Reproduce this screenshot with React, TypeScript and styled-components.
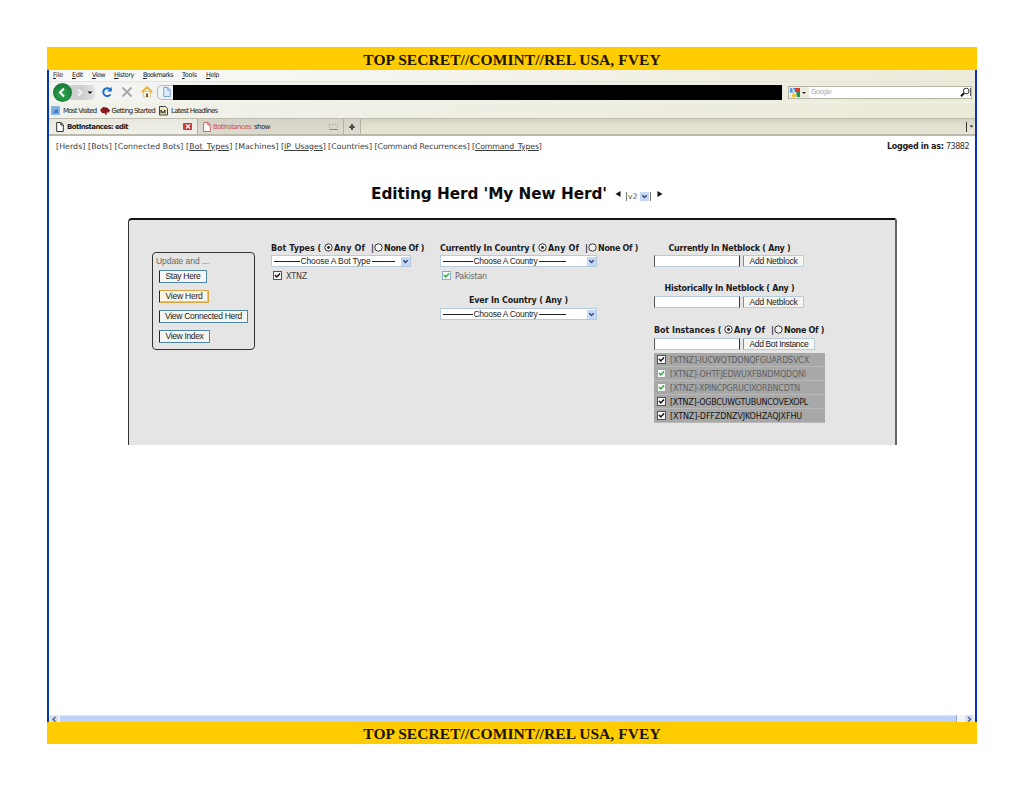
import React, { useLayoutEffect, useRef, useState } from "react";
import styled, { createGlobalStyle } from "styled-components";

const Global = createGlobalStyle`
  * { box-sizing: border-box; }
  body { margin: 0; background: #fff; color: #111; }
`;

const sans = `"DejaVu Sans", Verdana, sans-serif`;
const ui = `"Liberation Sans", Arial, sans-serif`;

const Page = styled.main`
  width: 1024px;
  height: 791px;
  padding: 47px 47px 0;
  overflow: hidden;
`;
const Banner = styled.div<{ $h: number }>`
  height: ${(p) => p.$h}px;
  width: 930px;
  background: #ffcc00;
  text-align: center;
  font: bold 15.5px/${(p) => p.$h + 2}px "Liberation Serif", serif;
  color: #1a1400;
`;
const Browser = styled.section`
  width: 930px;
  height: 652px;
  border-left: 2px solid #0636b8;
  border-right: 2px solid #0a2cc8;
  display: flex;
  flex-direction: column;
`;
const Label = styled.span<{ $size: number; $bold?: boolean; $color?: string; $ui?: boolean }>`
  display: inline-block;
  white-space: pre;
  font-family: ${(p) => (p.$ui ? ui : sans)};
  font-size: ${(p) => p.$size}px;
  font-weight: ${(p) => (p.$bold ? 700 : 400)};
  color: ${(p) => p.$color || "#1c1c1c"};
  flex: none;
`;

type FitProps = { w: number; size?: number; bold?: boolean; color?: string; plain?: boolean; children: React.ReactNode };

/* Tracks a label so that it fills the requested width. */
function Fit({ w, size = 8, bold, color, plain, children }: FitProps) {
  const ref = useRef<HTMLSpanElement>(null);
  const [gap, setGap] = useState(0);
  useLayoutEffect(() => {
    const el = ref.current;
    if (!el) return;
    const n = (el.textContent || "").length;
    if (n > 0) setGap((w - el.getBoundingClientRect().width) / n);
  }, [w]);
  return (
    <Label ref={ref} $size={size} $bold={bold} $color={color} $ui={plain} style={{ letterSpacing: gap }}>
      {children}
    </Label>
  );
}

const MenuBar = styled.div`
  height: 11px;
  display: flex;
  align-items: flex-start;
  gap: 9px;
  padding: 1px 0 0 4px;
  line-height: 9px;
  background: linear-gradient(90deg, #f8f9f8, #f4f4ee 40%, #efeee0 75%, #edebdc);
`;
const Toolbar = styled.div`
  height: 21px;
  display: flex;
  align-items: center;
  border-top: 1px solid #e4e4de;
  background: linear-gradient(90deg, #f4f5f3, #efefe6 50%, #ecead9);
`;
const Back = styled.div`
  width: 19px;
  height: 19px;
  margin-left: 4px;
  border-radius: 50%;
  background: radial-gradient(circle at 50% 60%, #2eaa50, #1b7d38 65%, #4c8c5a);
  display: flex;
  z-index: 1;
`;
const Forward = styled.div`
  width: 25px;
  height: 15px;
  margin-left: -2px;
  background: linear-gradient(90deg, #cfd1d0 55%, #e4e5e2);
  border-radius: 0 4px 4px 0;
  display: flex;
`;
const NavIcons = styled.div`
  display: flex;
  align-items: center;
  gap: 8px;
  margin-left: 6px;
`;
const PageSlot = styled.div`
  width: 16px;
  height: 15px;
  margin-left: 4px;
  border: 1px solid #b9b9b4;
  border-right: 0;
  border-radius: 5px 0 0 5px;
  background: #eef3f8;
  display: flex;
  align-items: center;
  justify-content: flex-end;
  padding-right: 2px;
`;
const Redacted = styled.div`
  width: 609px;
  height: 15px;
  background: #000;
`;
const Search = styled.div`
  margin-left: 6px;
  width: 184px;
  height: 13px;
  border: 1px solid #b5b5a6;
  background: #fff;
  display: flex;
  align-items: center;
  line-height: 11px;
`;
const Engine = styled.div`
  width: 20px;
  height: 11px;
  margin-right: 2px;
  background: #edebe0;
  display: flex;
`;
const Spacer = styled.div`
  flex: 1;
`;
const Bookmarks = styled.div`
  height: 16px;
  display: flex;
  align-items: center;
  padding: 1px 0 0 2px;
  line-height: 15px;
  border-top: 1px solid #f4f3e8;
  background: linear-gradient(90deg, #f1f2ec, #ebead9);
`;
const BookmarkIcon = styled.div<{ $ml?: number }>`
  width: 10px;
  height: 10px;
  margin-left: ${(p) => p.$ml || 0}px;
  margin-right: 2px;
  display: flex;
`;
const Tabs = styled.div`
  height: 18px;
  display: flex;
  align-items: center;
  border-top: 1px solid #bdbcae;
  border-bottom: 2px solid #bbb9a9;
  background: linear-gradient(#d3d1c2, #e3e1d0 45%, #e6e4d2);
`;
const Tab = styled.div<{ $w: number; $active?: boolean }>`
  width: ${(p) => p.$w}px;
  height: 15px;
  padding: ${(p) => (p.$active ? "0 5px 0 7px" : "0 5px")};
  display: flex;
  align-items: center;
  line-height: 14px;
  border-right: 1px solid #b3b1a5;
  background: ${(p) => (p.$active ? "linear-gradient(#e9e8df, #f1f0e8)" : "linear-gradient(#d5d3c7, #dddbcf)")};
`;
const TabText = styled.div<{ $ml?: number }>`
  margin-left: ${(p) => p.$ml ?? 3}px;
  display: flex;
`;
const CloseButton = styled.div`
  width: 9px;
  height: 7px;
  background: #c93b3b;
  border-radius: 1px;
  display: flex;
  justify-content: center;
`;
const GhostClose = styled.div`
  width: 9px;
  height: 6px;
  border: 1px dotted #aaa;
  border-bottom: 1px solid #888;
`;
const TabEnd = styled.div`
  width: 9px;
  height: 10px;
  border-left: 1px solid #333;
  display: flex;
  align-items: center;
  justify-content: center;
`;

const Content = styled.div`
  flex: 1;
  background: #fff;
`;
const NavRow = styled.div`
  height: 21px;
  padding: 0 6px 0 7px;
  display: flex;
  align-items: center;
  justify-content: space-between;
  line-height: 12px;
`;
const Links = styled.nav`
  display: flex;
`;
const Account = styled.div`
  display: flex;
`;
const Ul = styled.u`
  text-underline-offset: 1px;
  text-decoration-thickness: 1px;
`;
const Title = styled.h1`
  margin: 25px 0 0 322px;
  height: 24px;
  display: flex;
  align-items: center;
  line-height: 24px;
  font-weight: 400;
`;
const TitleText = styled.div`
  width: 244px;
  display: flex;
  flex: none;
`;
const Version = styled.div`
  height: 9px;
  width: 25px;
  margin: 4px 6px 0 5px;
  border-left: 1px solid #777;
  border-right: 1px solid #777;
  display: flex;
  align-items: center;
  justify-content: space-between;
  padding: 0 1px;
  line-height: 9px;
`;
const Panel = styled.div`
  margin: 12px 0 0 79px;
  width: 769px;
  height: 227px;
  padding: 22px 0 0 23px;
  background: #e5e5e5;
  border-top: 2px solid #111;
  border-left: 1px solid #333;
  border-right: 2px solid #666;
  border-radius: 4px 3px 0 0;
  display: flex;
  align-items: flex-start;
`;
const ActionBox = styled.div`
  width: 103px;
  height: 98px;
  margin-top: 10px;
  padding: 3px 0 0 6px;
  border: 1px solid #333;
  border-radius: 4px;
  display: flex;
  flex-direction: column;
  align-items: flex-start;
  gap: 7px;
`;
const Caption = styled.div`
  height: 7px;
  line-height: 11px;
  display: flex;
  margin-left: -3px;
`;
const Button = styled.div<{ $w: number; $hot?: boolean; $soft?: boolean }>`
  width: ${(p) => p.$w}px;
  height: ${(p) => (p.$soft ? 12 : 13)}px;
  line-height: 11px;
  display: flex;
  justify-content: center;
  background: ${(p) => (p.$hot ? "#fbf6e6" : "#f5f5f2")};
  border: 1px solid ${(p) => (p.$hot ? "#d9a441" : p.$soft ? "#b5ccd9" : "#4f86a6")};
  border-left-color: ${(p) => (p.$soft ? "#889" : "#152c44")};
  border-radius: 1px;
  ${(p) => (p.$hot ? "box-shadow: inset -1px -1px #efc46d;" : "")}
`;
const Column = styled.div<{ $ml: number; $w: number }>`
  width: ${(p) => p.$w}px;
  margin-left: ${(p) => p.$ml}px;
  flex: none;
`;
const Heading = styled.div<{ $center?: number; $mt?: number; $h?: number }>`
  margin-top: ${(p) => p.$mt || 0}px;
  height: ${(p) => p.$h || 14}px;
  line-height: 12px;
  display: flex;
  align-items: flex-start;
  padding-top: 1px;
  width: ${(p) => (p.$center ? p.$center + "px" : "auto")};
  justify-content: ${(p) => (p.$center ? "center" : "flex-start")};
`;
const Select = styled.div<{ $w: number }>`
  width: ${(p) => p.$w}px;
  height: 12px;
  border: 1px solid #b5cbdc;
  background: #fff;
  display: flex;
  align-items: center;
  padding: 0 0 0 2px;
  line-height: 10px;
`;
const Dash = styled.i<{ $lead?: boolean }>`
  flex: 1 1 ${(p) => (p.$lead ? 2 : 0)}px;
  height: 1px;
  margin: 0 1px 0 ${(p) => (p.$lead ? 0 : 1)}px;
  background: #222;
`;
const Drop = styled.div<{ $gap: number }>`
  width: 9px;
  height: 9px;
  flex: none;
  margin-left: ${(p) => p.$gap}px;
  background: #c4d7f5;
  display: flex;
`;
const CheckRow = styled.div`
  height: 18px;
  padding: 0 0 1px 2px;
  display: flex;
  align-items: center;
  gap: 4px;
  line-height: 10px;
`;
const CheckText = styled.div`
  display: flex;
  padding-top: 2px;
`;
const InputRow = styled.div`
  display: flex;
  height: 12px;
  gap: 3px;
`;
const Input = styled.div`
  width: 86px;
  height: 12px;
  background: #fff;
  border: 1px solid #b5cbdc;
  border-left-color: #555;
  border-right: 1px solid #333;
`;
const List = styled.div`
  margin-top: 3px;
  width: 171px;
`;
const Item = styled.div`
  height: 14px;
  border-bottom: 1px solid #b9b9b9;
  background: #a8a8a8;
  padding-left: 3px;
  display: flex;
  align-items: center;
  gap: 4px;
  line-height: 12px;
`;
const ItemText = styled.div`
  display: flex;
  padding-top: 3px;
`;
const ScrollBar = styled.div`
  height: 7px;
  display: flex;
  background: #f3f3f3;
  padding: 0 2px 0 1px;
  gap: 2px;
`;
const ScrollEnd = styled.div`
  width: 8px;
  height: 7px;
  background: #d3e0f7;
  display: flex;
`;
const Thumb = styled.div`
  width: 897px;
  height: 7px;
  border-top: 1px solid #d8e4fb;
  border-right: 1px solid #8ea4cc;
  background: #bfd3f7;
`;

const Check = ({ green }: { green?: boolean }) => (
  <svg width="9" height="9" viewBox="0 0 9 9">
    <rect x=".5" y=".5" width="8" height="8" fill="#fafafa" stroke={green ? "#86aec4" : "#46545e"} />
    <path d="M2 4l1.800 2L7 2.500" fill="none" stroke={green ? "#29a844" : "#111"} strokeWidth="1.500" />
  </svg>
);
const Radio = ({ on }: { on?: boolean }) => (
  <svg width="9" height="9" viewBox="0 0 9 9">
    <circle cx="4.500" cy="4.500" r="3.700" fill="#f3f3f3" stroke="#222" strokeWidth=".9" />
    {on && <circle cx="4.500" cy="4.500" r="1.400" fill="#222" />}
  </svg>
);
const PageIcon = ({ tone = "#333", fill = "#fff" }: { tone?: string; fill?: string }) => (
  <svg width="8" height="10" viewBox="0 0 8 10">
    <path d="M.7.5h4.200l2.400 2.300v6.700H.7zM4.800.5v2.500h2.400" fill={fill} stroke={tone} />
  </svg>
);
const Arrow = ({ left }: { left?: boolean }) => (
  <svg width="6" height="6" viewBox="0 0 6 6">
    <path d={left ? "M5.500 0v6L.5 3z" : "M.5 0v6l5-3z"} fill="#111" />
  </svg>
);
const Chevron = ({ gap }: { gap: number }) => (
  <Drop $gap={gap}>
    <svg width="9" height="9" viewBox="0 0 9 9">
      <path d="M2.300 3.300l2.200 2.200 2.200-2.200" fill="none" stroke="#2f4a78" strokeWidth="1.500" />
    </svg>
  </Drop>
);

const Choice = styled.div<{ $w: number }>`
  width: ${(p) => p.$w}px;
  padding-left: 1px;
  display: flex;
  gap: 6px;
`;

const AnyNone = ({ name, w }: { name: string; w: number }) => (
  <>
    <Fit w={w} bold>{name + " ( "}</Fit>
    <Radio on />
    <Choice $w={41}>
      <Fit w={31} bold>Any Of</Fit>
      <Fit w={3} bold>|</Fit>
    </Choice>
    <Radio />
    <Choice $w={41}><Fit w={40} bold>None Of )</Fit></Choice>
  </>
);

const Chooser = ({ w, label, lw, gap }: { w: number; label: string; lw: number; gap: number }) => (
  <Select $w={w}>
    <Dash $lead />
    <Fit w={lw} plain size={8.5}>{label}</Fit>
    <Dash />
    <Chevron gap={gap} />
  </Select>
);

const menus: [string, number][] = [["File", 10], ["Edit", 11], ["View", 13], ["History", 20], ["Bookmarks", 30], ["Tools", 15], ["Help", 13]];

const links: { text: string; w: number; under?: boolean }[] = [
  { text: "Herds", w: 32 },
  { text: "Bots", w: 26.5 },
  { text: "Connected Bots", w: 71.5 },
  { text: "Bot_Types", w: 49, under: true },
  { text: "Machines", w: 46 },
  { text: "IP_Usages", w: 47, under: true },
  { text: "Countries", w: 46.5 },
  { text: "Command Recurrences", w: 97.5 },
  { text: "Command_Types", w: 72, under: true },
];

const instances = [
  { name: "[XTNZ]-IUCWQTDONQFGUARDSVCX", w: 139, color: "#5c5c5c" },
  { name: "[XTNZ]-OHTFJEDWUXFBNDMQDQNI", w: 136, color: "#626262", green: true },
  { name: "[XTNZ]-XPINCPGRUCIXORBNCDTN", w: 130, color: "#626262", green: true },
  { name: "[XTNZ]-OGBCUWGTUBUNCOVEXOPL", w: 138, color: "#161616" },
  { name: "[XTNZ]-DFFZDNZVJKOHZAQJXFHU", w: 132, color: "#161616" },
];

const BannerText = styled.strong`
  display: inline-block;
  white-space: nowrap;
`;
function Marking() {
  const ref = useRef<HTMLElement>(null);
  const [gap, setGap] = useState(0);
  useLayoutEffect(() => {
    if (ref.current) setGap((297.5 - ref.current.getBoundingClientRect().width) / 33);
  }, []);
  return <BannerText ref={ref} style={{ letterSpacing: gap }}>TOP SECRET//COMINT//REL USA, FVEY</BannerText>;
}

export default function App() {
  return (
    <Page>
      <Global />
      <Banner $h={23}><Marking /></Banner>
      <Browser>
        <MenuBar>
          {menus.map(([m, w]) => (
            <Fit key={m} w={w} size={6.5}><Ul>{m[0]}</Ul>{m.slice(1)}</Fit>
          ))}
        </MenuBar>
        <Toolbar>
          <Back>
            <svg width="19" height="19" viewBox="0 0 19 19"><path d="M11 5.500L7 9.500l4 4" fill="none" stroke="#fff" strokeWidth="2" /></svg>
          </Back>
          <Forward>
            <svg width="25" height="15" viewBox="0 0 25 15">
              <path d="M8 4.500l3.500 3L8 10.500" fill="none" stroke="#f4f4f4" strokeWidth="1.800" />
              <path d="M17.500 6.500h5l-2.500 2.500z" fill="#111" />
            </svg>
          </Forward>
          <NavIcons>
            <svg width="12" height="12" viewBox="0 0 12 12">
              <path d="M9.500 8.500A4 4 0 1 1 9 3.200" fill="none" stroke="#1b6fc8" strokeWidth="2" />
              <path d="M10.800.800v4.700H6.200z" fill="#1b6fc8" />
            </svg>
            <svg width="12" height="12" viewBox="0 0 12 12"><path d="M1.500 1.500l9 9M10.500 1.500l-9 9" stroke="#a7a9a8" strokeWidth="1.900" /></svg>
            <svg width="12" height="12" viewBox="0 0 12 12">
              <path d="M2.500 5.500h7v5.500h-7z" fill="#fbf3d8" stroke="#d6bf86" strokeWidth=".8" />
              <path d="M.8 6.200L6 1.300l5.200 4.900" fill="none" stroke="#ecb83c" strokeWidth="2.200" />
              <path d="M5 7.500h2V11H5z" fill="#70604a" />
            </svg>
          </NavIcons>
          <PageSlot><PageIcon tone="#7fa4cc" fill="#dceafa" /></PageSlot>
          <Redacted />
          <Search>
            <Engine>
              <svg width="20" height="11" viewBox="0 0 20 11">
                <path d="M1 1h5v5H1z" fill="#5f93d8" /><path d="M3 7h4v3H3z" fill="#efbf35" />
                <path d="M6 1h5v4H6z" fill="#d93a2b" /><path d="M7 4h4v6H8z" fill="#229447" />
                <path d="M3 1l3 5M1.500 7l4-4" stroke="#fff" /><path d="M13 5h4l-2 2z" fill="#222" />
              </svg>
            </Engine>
            <Fit w={20} size={7} color="#b0b0b0">Google</Fit>
            <Spacer />
            <svg width="11" height="11" viewBox="0 0 11 11">
              <circle cx="6.200" cy="4" r="2.800" fill="#fff" stroke="#333" />
              <path d="M4 6.200L1 9.300" stroke="#111" strokeWidth="2" />
              <path d="M10.400 1v8" stroke="#555" />
            </svg>
          </Search>
        </Toolbar>
        <Bookmarks>
          <BookmarkIcon>
            <svg width="10" height="10" viewBox="0 0 10 10"><path d="M.5.500h8v8h-8z" fill="#7eaee4" stroke="#8fb4e0" /><path d="M2 7l3-4 2 1v3z" fill="#3f7ccc" /></svg>
          </BookmarkIcon>
          <Fit w={33.5} size={7}>Most Visited</Fit>
          <BookmarkIcon $ml={3}>
            <svg width="10" height="10" viewBox="0 0 10 10"><path d="M0 4l3-3 4 .5L10 4 9 6.500H7L6 9.500 4.500 7 2 7z" fill="#8b1a20" /></svg>
          </BookmarkIcon>
          <Fit w={43.5} size={7}>Getting Started</Fit>
          <BookmarkIcon $ml={4}>
            <svg width="10" height="10" viewBox="0 0 10 10"><path d="M.5.500h6l2 2v6.500h-8z" fill="#efe9bd" stroke="#444" /><path d="M2 7.500V4l2 3 2-3v3.500" fill="none" stroke="#222" /></svg>
          </BookmarkIcon>
          <Fit w={46.5} size={7}>Latest Headlines</Fit>
        </Bookmarks>
        <Tabs>
          <Tab $w={149} $active>
            <PageIcon />
            <TabText><Fit w={61} size={7} bold>BotInstances: edit</Fit></TabText>
            <Spacer />
            <CloseButton><svg width="8" height="7" viewBox="0 0 8 7"><path d="M2 1.500l4 4M6 1.500l-4 4" stroke="#fff" strokeWidth="1.200" /></svg></CloseButton>
          </Tab>
          <Tab $w={146}>
            <PageIcon tone="#c86a64" />
            <TabText $ml={2}>
              <Fit w={41} size={7} color="#c5524e">{"BotInstances: "}</Fit>
              <Fit w={16} size={7}>show</Fit>
            </TabText>
            <Spacer />
            <GhostClose />
          </Tab>
          <Tab $w={17}>
            <svg width="6" height="6" viewBox="0 0 6 6"><path d="M3 .3v5.400M.3 3h5.400" stroke="#111" strokeWidth="1.600" /><path d="M2.500 2.500h1v1h-1z" fill="#ddd" /></svg>
          </Tab>
          <Spacer />
          <TabEnd><svg width="5" height="3" viewBox="0 0 5 3"><path d="M.5.500h4L2.500 2.500z" fill="#222" /></svg></TabEnd>
        </Tabs>
        <Content>
          <NavRow>
            <Links>
              {links.map((l) => (
                <Fit key={l.text} w={l.w} size={7.8} color="#3a3a3a">
                  [{l.under ? <Ul>{l.text}</Ul> : l.text}]{" "}
                </Fit>
              ))}
            </Links>
            <Account>
              <Fit w={59} bold>{"Logged in as: "}</Fit>
              <Fit w={23} color="#333">73882</Fit>
            </Account>
          </NavRow>
          <Title>
            <TitleText><Fit w={236} size={15.3} bold color="#0c0c0c">Editing Herd 'My New Herd'</Fit></TitleText>
            <Arrow left />
            <Version>
              <Fit w={10} size={7.5} color="#555">v2</Fit>
              <Chevron gap={0} />
            </Version>
            <Arrow />
          </Title>
          <Panel>
            <ActionBox>
              <Caption><Fit w={53} color="#6a6a6a" plain size={8.5}>Update and ...</Fit></Caption>
              <Button $w={48}><Fit w={35} plain size={8.5}>Stay Here</Fit></Button>
              <Button $w={50} $hot><Fit w={37} plain size={8.5}>View Herd</Fit></Button>
              <Button $w={89}><Fit w={77} plain size={8.5}>View Connected Herd</Fit></Button>
              <Button $w={51}><Fit w={38} plain size={8.5}>View Index</Fit></Button>
            </ActionBox>
            <Column $ml={16} $w={153}>
              <Heading $h={13}><AnyNone name="Bot Types" w={53} /></Heading>
              <Chooser w={140} label="Choose A Bot Type" lw={70} gap={5} />
              <CheckRow><Check /><CheckText><Fit w={21} color="#444">XTNZ</Fit></CheckText></CheckRow>
            </Column>
            <Column $ml={16} $w={198}>
              <Heading $h={13}><AnyNone name="Currently In Country" w={98} /></Heading>
              <Chooser w={157} label="Choose A Country" lw={64} gap={20} />
              <CheckRow><Check green /><CheckText><Fit w={32} color="#666">Pakistan</Fit></CheckText></CheckRow>
              <Heading $center={157} $mt={9}><Fit w={99} bold>Ever In Country ( Any )</Fit></Heading>
              <Chooser w={157} label="Choose A Country" lw={64} gap={20} />
            </Column>
            <Column $ml={16} $w={173}>
              <Heading $center={151} $h={13}><Fit w={122} bold>Currently In Netblock ( Any )</Fit></Heading>
              <InputRow><Input /><Button $w={61} $soft><Fit w={48} plain size={8.5}>Add Netblock</Fit></Button></InputRow>
              <Heading $center={151} $mt={15}><Fit w={130} bold>Historically In Netblock ( Any )</Fit></Heading>
              <InputRow><Input /><Button $w={61} $soft><Fit w={48} plain size={8.5}>Add Netblock</Fit></Button></InputRow>
              <Heading $mt={16}><AnyNone name="Bot Instances" w={70} /></Heading>
              <InputRow><Input /><Button $w={72} $soft><Fit w={59} plain size={8.5}>Add Bot Instance</Fit></Button></InputRow>
              <List>
                {instances.map((i) => (
                  <Item key={i.name}><Check green={i.green} /><ItemText><Fit w={i.w} color={i.color}>{i.name}</Fit></ItemText></Item>
                ))}
              </List>
            </Column>
          </Panel>
        </Content>
        <ScrollBar>
          <ScrollEnd><svg width="8" height="7" viewBox="0 0 8 7"><path d="M5.500 2L3 4.500l2.500 2" fill="none" stroke="#4d6185" strokeWidth="1.400" /></svg></ScrollEnd>
          <Thumb />
          <Spacer />
          <ScrollEnd><svg width="8" height="7" viewBox="0 0 8 7"><path d="M3 2l2.500 2.500L3 6.500" fill="none" stroke="#4d6185" strokeWidth="1.400" /></svg></ScrollEnd>
        </ScrollBar>
      </Browser>
      <Banner $h={22}><Marking /></Banner>
    </Page>
  );
}
